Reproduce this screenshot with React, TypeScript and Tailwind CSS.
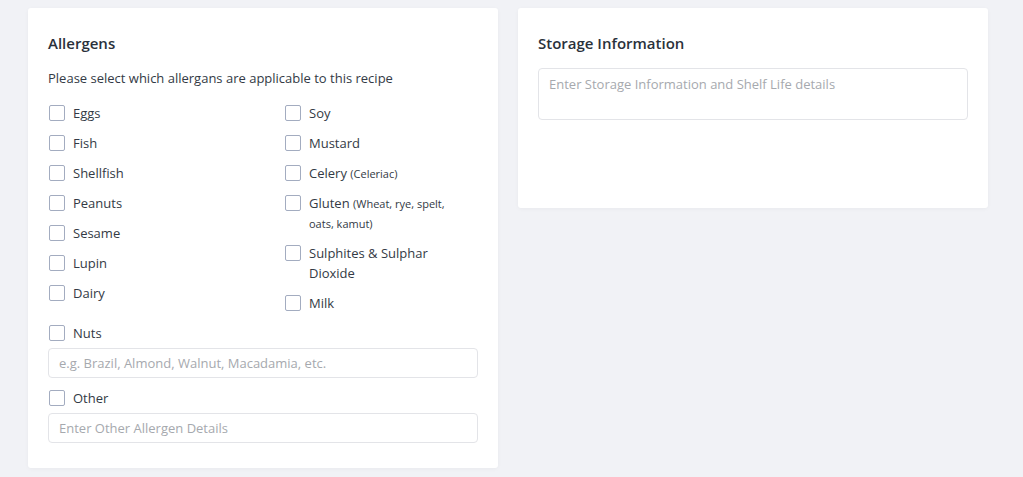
import React from "react";

const leftCol = ["Eggs", "Fish", "Shellfish", "Peanuts", "Sesame", "Lupin", "Dairy"];

function Box() {
    return <span className="ml-px mt-[2px] h-4 w-4 shrink-0 rounded-[2px] border border-[#a3acc0] bg-white" />;
}

function Check({ children }: { children: React.ReactNode }) {
    return (
        <label className="flex items-start gap-2 text-[13px] leading-5 text-[#333a45]">
            <Box />
            <span>{children}</span>
        </label>
    );
}

function Small({ children }: { children: React.ReactNode }) {
    return <span className="text-[11px] leading-none">{children}</span>;
}

export default function App() {
    return (
        <div className="min-h-screen bg-[#f1f2f6] pl-7 pt-2" style={{ fontFamily: "'Open Sans', 'Liberation Sans', sans-serif" }}>
            <div className="flex items-start gap-5">
                {/* Allergens */}
                <section className="w-[470px] rounded-[3px] bg-white px-5 pb-[25px] pt-[25px] shadow-[0_1px_4px_rgba(0,0,0,0.04)]">
                    <h2 className="text-[15px] font-semibold leading-5 text-[#2a313b]">Allergens</h2>
                    <p className="mt-[15px] text-[13px] leading-5 text-[#333a45]">Please select which allergans are applicable to this recipe</p>

                    <div className="mt-[15px] grid grid-cols-[236px_1fr]">
                        <div className="flex flex-col gap-[10px]">
                            {leftCol.map((l) => (
                                <Check key={l}>{l}</Check>
                            ))}
                        </div>
                        <div className="flex flex-col gap-[10px] pr-8">
                            <Check>Soy</Check>
                            <Check>Mustard</Check>
                            <Check>
                                Celery <Small>(Celeriac)</Small>
                            </Check>
                            <Check>
                                Gluten <Small>(Wheat, rye, spelt, oats, kamut)</Small>
                            </Check>
                            <Check>Sulphites &amp; Sulphar Dioxide</Check>
                            <Check>Milk</Check>
                        </div>
                    </div>

                    <div className="mt-[10px]">
                        <Check>Nuts</Check>
                    </div>
                    <input
                        className="mt-[5px] h-[30px] w-full rounded-[4px] border border-[#e3e4e8] px-[10px] text-[13px] text-[#333a45] outline-none placeholder:text-[#a6a9ae]"
                        placeholder="e.g. Brazil, Almond, Walnut, Macadamia, etc."
                    />
                    <div className="mt-[10px]">
                        <Check>Other</Check>
                    </div>
                    <input
                        className="mt-[5px] h-[30px] w-full rounded-[4px] border border-[#e3e4e8] px-[10px] text-[13px] text-[#333a45] outline-none placeholder:text-[#a6a9ae]"
                        placeholder="Enter Other Allergen Details"
                    />
                </section>

                {/* Storage */}
                <section className="h-[200px] w-[470px] rounded-[3px] bg-white px-5 pt-[25px] shadow-[0_1px_4px_rgba(0,0,0,0.04)]">
                    <h2 className="text-[15px] font-semibold leading-5 text-[#2a313b]">Storage Information</h2>
                    <textarea
                        className="mt-[15px] block h-[52px] w-full resize-none rounded-[4px] border border-[#e3e4e8] px-[10px] py-[5px] text-[13px] leading-5 text-[#333a45] outline-none placeholder:text-[#a6a9ae]"
                        placeholder="Enter Storage Information and Shelf Life details"
                    />
                </section>
            </div>
        </div>
    );
}
